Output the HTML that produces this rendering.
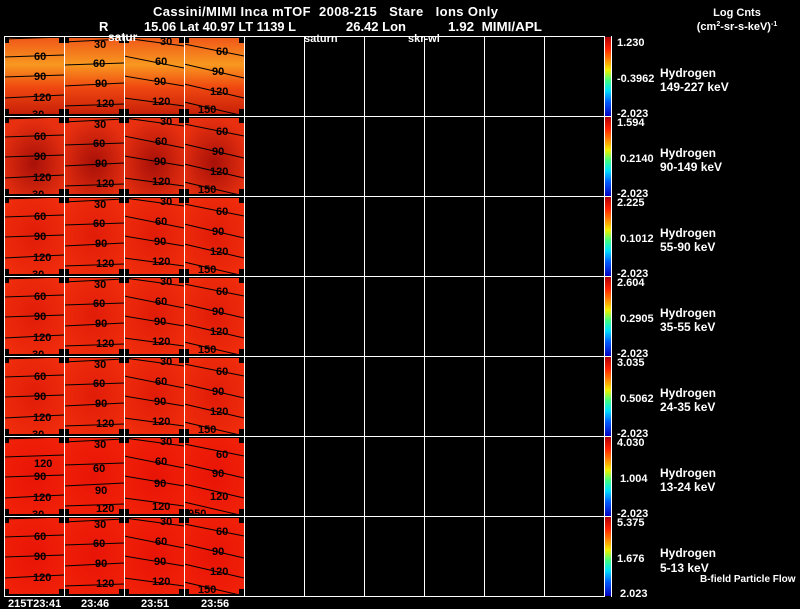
<!DOCTYPE html>
<html><head><meta charset="utf-8"><style>
body{margin:0;background:#000;width:800px;height:609px;overflow:hidden;font-family:"Liberation Sans",sans-serif;}
svg{display:block}
text{white-space:pre}
</style></head><body>
<svg width="800" height="609" viewBox="0 0 800 609" xmlns="http://www.w3.org/2000/svg" font-family="Liberation Sans, sans-serif">
<defs>
<linearGradient id="cb" x1="0" y1="0" x2="0" y2="1">
<stop offset="0" stop-color="#b00000"/><stop offset="0.15" stop-color="#ff2000"/><stop offset="0.3" stop-color="#ff9000"/><stop offset="0.42" stop-color="#f0f000"/><stop offset="0.55" stop-color="#40ff80"/><stop offset="0.68" stop-color="#00e0ff"/><stop offset="0.82" stop-color="#0060ff"/><stop offset="1" stop-color="#0000c0"/></linearGradient>
<linearGradient id="g1" x1="0" y1="0" x2="0" y2="1"><stop offset="0" stop-color="#f05818"/><stop offset="0.35" stop-color="#f89820"/><stop offset="0.65" stop-color="#f04810"/><stop offset="1" stop-color="#c82008"/></linearGradient>
<radialGradient id="g2" cx="0.5" cy="0.6" r="0.6"><stop offset="0" stop-color="#a81008"/><stop offset="1" stop-color="#e83010"/></radialGradient>
<radialGradient id="g3" cx="0.5" cy="0.5" r="0.6"><stop offset="0" stop-color="#e01c08"/><stop offset="1" stop-color="#f02c0c"/></radialGradient>
<radialGradient id="g4" cx="0.5" cy="0.5" r="0.6"><stop offset="0" stop-color="#e81406"/><stop offset="1" stop-color="#f02008"/></radialGradient>
<polygon id="oct" points="0,7 5,7 5,2 55,2 55,7 60,7 60,73 55,73 55,78 5,78 5,73 0,73"/>
<g id="l1" stroke="#000" fill="none" stroke-width="1"><path d="M0,3 L60,1"/><path d="M0,21 L60,19"/><path d="M0,41 L60,39"/><path d="M0,62 L60,59"/></g>
<g id="l2" stroke="#000" fill="none" stroke-width="1"><path d="M0,6 L60,3"/><path d="M0,29 L60,27"/><path d="M0,50 L60,47"/><path d="M0,70 L60,68"/></g>
<g id="l3" stroke="#000" fill="none" stroke-width="1"><path d="M0,2 L60,10"/><path d="M0,20 L60,32"/><path d="M0,40 L60,50"/><path d="M0,62 L60,70"/></g>
<g id="l4" stroke="#000" fill="none" stroke-width="1"><path d="M0,8 L60,20"/><path d="M0,28 L60,42"/><path d="M0,48 L60,62"/><path d="M0,66 L60,80"/></g>
</defs>

<g id="panels">
<g transform="translate(4,36)"><use href="#oct" fill="url(#g1)"/><use href="#l1"/></g>
<g transform="translate(64,36)"><use href="#oct" fill="url(#g1)"/><use href="#l2"/></g>
<g transform="translate(124,36)"><use href="#oct" fill="url(#g1)"/><use href="#l3"/></g>
<g transform="translate(184,36)"><use href="#oct" fill="url(#g1)"/><use href="#l4"/></g>
<g transform="translate(4,116)"><use href="#oct" fill="url(#g2)"/><use href="#l1"/></g>
<g transform="translate(64,116)"><use href="#oct" fill="url(#g2)"/><use href="#l2"/></g>
<g transform="translate(124,116)"><use href="#oct" fill="url(#g2)"/><use href="#l3"/></g>
<g transform="translate(184,116)"><use href="#oct" fill="url(#g2)"/><use href="#l4"/></g>
<g transform="translate(4,196)"><use href="#oct" fill="url(#g3)"/><use href="#l1"/></g>
<g transform="translate(64,196)"><use href="#oct" fill="url(#g3)"/><use href="#l2"/></g>
<g transform="translate(124,196)"><use href="#oct" fill="url(#g3)"/><use href="#l3"/></g>
<g transform="translate(184,196)"><use href="#oct" fill="url(#g3)"/><use href="#l4"/></g>
<g transform="translate(4,276)"><use href="#oct" fill="url(#g3)"/><use href="#l1"/></g>
<g transform="translate(64,276)"><use href="#oct" fill="url(#g3)"/><use href="#l2"/></g>
<g transform="translate(124,276)"><use href="#oct" fill="url(#g3)"/><use href="#l3"/></g>
<g transform="translate(184,276)"><use href="#oct" fill="url(#g3)"/><use href="#l4"/></g>
<g transform="translate(4,356)"><use href="#oct" fill="url(#g3)"/><use href="#l1"/></g>
<g transform="translate(64,356)"><use href="#oct" fill="url(#g3)"/><use href="#l2"/></g>
<g transform="translate(124,356)"><use href="#oct" fill="url(#g3)"/><use href="#l3"/></g>
<g transform="translate(184,356)"><use href="#oct" fill="url(#g3)"/><use href="#l4"/></g>
<g transform="translate(4,436)"><use href="#oct" fill="url(#g4)"/><use href="#l1"/></g>
<g transform="translate(64,436)"><use href="#oct" fill="url(#g4)"/><use href="#l2"/></g>
<g transform="translate(124,436)"><use href="#oct" fill="url(#g4)"/><use href="#l3"/></g>
<g transform="translate(184,436)"><use href="#oct" fill="url(#g4)"/><use href="#l4"/></g>
<g transform="translate(4,516)"><use href="#oct" fill="url(#g4)"/><use href="#l1"/></g>
<g transform="translate(64,516)"><use href="#oct" fill="url(#g4)"/><use href="#l2"/></g>
<g transform="translate(124,516)"><use href="#oct" fill="url(#g4)"/><use href="#l3"/></g>
<g transform="translate(184,516)"><use href="#oct" fill="url(#g4)"/><use href="#l4"/></g>
</g>

<g font-size="11" font-weight="bold" fill="#000">
<text x="34" y="60">60</text><text x="34" y="80">90</text><text x="33" y="101">120</text><text x="32" y="118">30</text>
<text x="94" y="48">30</text><text x="93" y="67">60</text><text x="95" y="87">90</text><text x="96" y="107">120</text>
<text x="160" y="45">30</text><text x="155" y="65">60</text><text x="154" y="85">90</text><text x="152" y="105">120</text>
<text x="216" y="55">60</text><text x="212" y="75">90</text><text x="210" y="95">120</text><text x="198" y="113">150</text>

<text x="34" y="140">60</text><text x="34" y="160">90</text><text x="33" y="181">120</text><text x="32" y="198">30</text>
<text x="94" y="128">30</text><text x="93" y="147">60</text><text x="95" y="167">90</text><text x="96" y="187">120</text>
<text x="160" y="125">30</text><text x="155" y="145">60</text><text x="154" y="165">90</text><text x="152" y="185">120</text>
<text x="216" y="135">60</text><text x="212" y="155">90</text><text x="210" y="175">120</text><text x="198" y="193">150</text>

<text x="34" y="220">60</text><text x="34" y="240">90</text><text x="33" y="261">120</text><text x="32" y="278">30</text>
<text x="94" y="208">30</text><text x="93" y="227">60</text><text x="95" y="247">90</text><text x="96" y="267">120</text>
<text x="160" y="205">30</text><text x="155" y="225">60</text><text x="154" y="245">90</text><text x="152" y="265">120</text>
<text x="216" y="215">60</text><text x="212" y="235">90</text><text x="210" y="255">120</text><text x="198" y="273">150</text>

<text x="34" y="300">60</text><text x="34" y="320">90</text><text x="33" y="341">120</text><text x="32" y="358">30</text>
<text x="94" y="288">30</text><text x="93" y="307">60</text><text x="95" y="327">90</text><text x="96" y="347">120</text>
<text x="160" y="285">30</text><text x="155" y="305">60</text><text x="154" y="325">90</text><text x="152" y="345">120</text>
<text x="216" y="295">60</text><text x="212" y="315">90</text><text x="210" y="335">120</text><text x="198" y="353">150</text>

<text x="34" y="380">60</text><text x="34" y="400">90</text><text x="33" y="421">120</text><text x="32" y="438">30</text>
<text x="94" y="368">30</text><text x="93" y="387">60</text><text x="95" y="407">90</text><text x="96" y="427">120</text>
<text x="160" y="365">30</text><text x="155" y="385">60</text><text x="154" y="405">90</text><text x="152" y="425">120</text>
<text x="216" y="375">60</text><text x="212" y="395">90</text><text x="210" y="415">120</text><text x="198" y="433">150</text>

<text x="34" y="467">120</text><text x="34" y="480">90</text><text x="33" y="501">120</text><text x="32" y="518">30</text>
<text x="94" y="448">30</text><text x="93" y="472">60</text><text x="95" y="494">90</text><text x="96" y="512">120</text>
<text x="160" y="445">30</text><text x="155" y="465">60</text><text x="154" y="487">90</text><text x="152" y="510">120</text>
<text x="216" y="458">60</text><text x="212" y="477">90</text><text x="210" y="500">120</text><text x="188" y="517">950</text>

<text x="34" y="540">60</text><text x="34" y="560">90</text><text x="33" y="581">120</text>
<text x="94" y="528">30</text><text x="93" y="547">60</text><text x="95" y="567">90</text><text x="96" y="587">120</text>
<text x="160" y="525">30</text><text x="155" y="545">60</text><text x="154" y="565">90</text><text x="152" y="585">120</text>
<text x="216" y="535">60</text><text x="212" y="555">90</text><text x="210" y="575">120</text><text x="198" y="593">150</text>
</g>

<g stroke="#fff" stroke-width="1" fill="none">
<rect x="4.5" y="36.5" width="600" height="560"/>
<path d="M64.5,36V597M124.5,36V597M184.5,36V597M244.5,36V597M304.5,36V597M364.5,36V597M424.5,36V597M484.5,36V597M544.5,36V597"/>
<path d="M4,116.5H612M4,196.5H612M4,276.5H612M4,356.5H612M4,436.5H612M4,516.5H612"/>
</g>
<g>
<rect x="605" y="37" width="6" height="79" fill="url(#cb)"/>
<rect x="605" y="117" width="6" height="79" fill="url(#cb)"/>
<rect x="605" y="197" width="6" height="79" fill="url(#cb)"/>
<rect x="605" y="277" width="6" height="79" fill="url(#cb)"/>
<rect x="605" y="357" width="6" height="79" fill="url(#cb)"/>
<rect x="605" y="437" width="6" height="79" fill="url(#cb)"/>
<rect x="605" y="517" width="6" height="79" fill="url(#cb)"/>
</g>
<g stroke="#fff" fill="none"><path d="M611.5,36V597"/></g>

<g fill="#fff" font-size="13" font-weight="bold">
<text x="153" y="16" textLength="345" lengthAdjust="spacing">Cassini/MIMI Inca mTOF  2008-215   Stare   Ions Only</text>
<text x="99" y="31">R</text>
<text x="144" y="31" textLength="152" lengthAdjust="spacingAndGlyphs">15.06 Lat 40.97 LT 1139 L</text>
<text x="346" y="31">26.42 Lon</text>
<text x="448" y="31" textLength="94" lengthAdjust="spacingAndGlyphs">1.92  MIMI/APL</text>
<text x="108" y="41" font-size="12">satur</text>
<text x="304" y="42" font-size="11">saturn</text>
<text x="408" y="42" font-size="11">skr-wl</text>
<text x="737" y="16" text-anchor="middle" font-size="11">Log Cnts</text>
<text x="737" y="30" text-anchor="middle" font-size="11">(cm<tspan font-size="7" dy="-4">2</tspan><tspan dy="4">-sr-s-keV)</tspan><tspan font-size="7" dy="-4">-1</tspan></text>
</g>
<g fill="#fff" font-size="11" font-weight="bold">
<text x="617" y="46">1.230</text><text x="617" y="82">-0.3962</text><text x="617" y="117">-2.023</text>
<text x="617" y="126">1.594</text><text x="620" y="162">0.2140</text><text x="617" y="197">-2.023</text>
<text x="617" y="206">2.225</text><text x="620" y="242">0.1012</text><text x="617" y="277">-2.023</text>
<text x="617" y="286">2.604</text><text x="620" y="322">0.2905</text><text x="617" y="357">-2.023</text>
<text x="617" y="366">3.035</text><text x="620" y="402">0.5062</text><text x="617" y="437">-2.023</text>
<text x="617" y="446">4.030</text><text x="620" y="482">1.004</text><text x="617" y="517">-2.023</text>
<text x="617" y="526">5.375</text><text x="617" y="562">1.676</text><text x="620" y="597">2.023</text>
</g>
<g fill="#fff" font-size="12" font-weight="bold">
<text x="660" y="77">Hydrogen</text><text x="660" y="91">149-227 keV</text>
<text x="660" y="157">Hydrogen</text><text x="660" y="171">90-149 keV</text>
<text x="660" y="237">Hydrogen</text><text x="660" y="251">55-90 keV</text>
<text x="660" y="317">Hydrogen</text><text x="660" y="331">35-55 keV</text>
<text x="660" y="397">Hydrogen</text><text x="660" y="411">24-35 keV</text>
<text x="660" y="477">Hydrogen</text><text x="660" y="491">13-24 keV</text>
<text x="660" y="557">Hydrogen</text><text x="660" y="572">5-13 keV</text>
<text x="700" y="582" font-size="10">B-field Particle Flow</text>
</g>
<g fill="#fff" font-size="11" font-weight="bold">
<text x="8" y="607">215T23:41</text><text x="81" y="607">23:46</text><text x="141" y="607">23:51</text><text x="201" y="607">23:56</text>
</g>
</svg>
</body></html>
